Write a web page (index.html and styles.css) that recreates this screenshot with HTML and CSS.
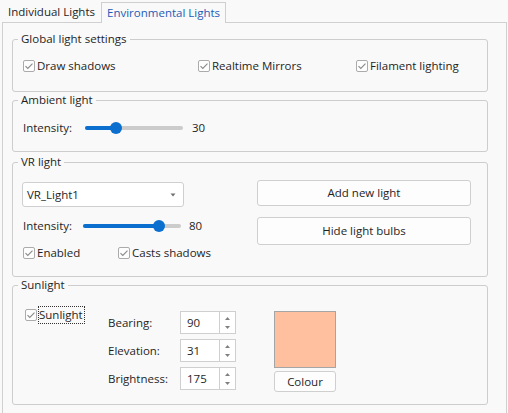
FILE: index.html
```html
<!DOCTYPE html>
<html>
<head>
<meta charset="utf-8">
<link rel="stylesheet" href="styles.css">
</head>
<body>
<div class="tabs">
  <div class="tab">Individual Lights</div>
  <div class="tab active">Environmental Lights</div>
</div>
<div class="panel">
  <fieldset class="group g-global">
    <legend>Global light settings</legend>
    <div class="global-row">
      <label class="cb"><span class="box"><svg viewBox="0 0 12 12" width="12" height="12"><path d="M2.5 6.2 L4.8 8.5 L9.5 3.6" fill="none" stroke="#8a8a8a" stroke-width="1.1"/></svg></span>Draw shadows</label>
      <label class="cb"><span class="box"><svg viewBox="0 0 12 12" width="12" height="12"><path d="M2.5 6.2 L4.8 8.5 L9.5 3.6" fill="none" stroke="#8a8a8a" stroke-width="1.1"/></svg></span>Realtime Mirrors</label>
      <label class="cb"><span class="box"><svg viewBox="0 0 12 12" width="12" height="12"><path d="M2.5 6.2 L4.8 8.5 L9.5 3.6" fill="none" stroke="#8a8a8a" stroke-width="1.1"/></svg></span>Filament lighting</label>
    </div>
  </fieldset>

  <fieldset class="group g-ambient">
    <legend>Ambient light</legend>
    <div class="slider-row amb">
      <span class="lbl">Intensity:</span>
      <div class="slider"><div class="fill" style="width:31px"></div><div class="thumb"></div></div>
      <span class="val">30</span>
    </div>
  </fieldset>

  <fieldset class="group g-vr">
    <legend>VR light</legend>
    <div class="vr-body">
      <div class="vr-left">
        <div class="combo"><span>VR_Light1</span><svg class="caret" viewBox="0 0 6 4" width="6" height="4"><path d="M0.5 0.5 L5.5 0.5 L3 3.5 Z" fill="#707070"/></svg></div>
        <div class="slider-row vr">
          <span class="lbl">Intensity:</span>
          <div class="slider"><div class="fill" style="width:76px"></div><div class="thumb"></div></div>
          <span class="val">80</span>
        </div>
        <div class="vr-checks">
          <label class="cb"><span class="box"><svg viewBox="0 0 12 12" width="12" height="12"><path d="M2.5 6.2 L4.8 8.5 L9.5 3.6" fill="none" stroke="#8a8a8a" stroke-width="1.1"/></svg></span>Enabled</label>
          <label class="cb"><span class="box"><svg viewBox="0 0 12 12" width="12" height="12"><path d="M2.5 6.2 L4.8 8.5 L9.5 3.6" fill="none" stroke="#8a8a8a" stroke-width="1.1"/></svg></span>Casts shadows</label>
        </div>
      </div>
      <div class="vr-right">
        <button class="btn b1">Add new light</button>
        <button class="btn b2">Hide light bulbs</button>
      </div>
    </div>
  </fieldset>

  <fieldset class="group g-sun">
    <legend>Sunlight</legend>
    <div class="sun-body">
      <div class="sun-cb">
        <label class="cb"><span class="box"><svg viewBox="0 0 12 12" width="12" height="12"><path d="M2.5 6.2 L4.8 8.5 L9.5 3.6" fill="none" stroke="#8a8a8a" stroke-width="1.1"/></svg></span><span class="focus">Sunlight</span></label>
      </div>
      <div class="sun-grid">
        <span class="slbl">Bearing:</span>
        <div class="spin"><span class="sval">90</span><span class="sarr"><svg viewBox="0 0 5 3" width="5" height="3"><path d="M0 3 L5 3 L2.5 0 Z" fill="#808080"/></svg><svg viewBox="0 0 5 3" width="5" height="3"><path d="M0 0 L5 0 L2.5 3 Z" fill="#808080"/></svg></span></div>
        <span class="slbl">Elevation:</span>
        <div class="spin"><span class="sval">31</span><span class="sarr"><svg viewBox="0 0 5 3" width="5" height="3"><path d="M0 3 L5 3 L2.5 0 Z" fill="#808080"/></svg><svg viewBox="0 0 5 3" width="5" height="3"><path d="M0 0 L5 0 L2.5 3 Z" fill="#808080"/></svg></span></div>
        <span class="slbl">Brightness:</span>
        <div class="spin"><span class="sval">175</span><span class="sarr"><svg viewBox="0 0 5 3" width="5" height="3"><path d="M0 3 L5 3 L2.5 0 Z" fill="#808080"/></svg><svg viewBox="0 0 5 3" width="5" height="3"><path d="M0 0 L5 0 L2.5 3 Z" fill="#808080"/></svg></span></div>
      </div>
      <div class="sun-colour">
        <div class="swatch"></div>
        <button class="btn cbtn">Colour</button>
      </div>
    </div>
  </fieldset>
</div>
</body>
</html>
```

FILE: styles.css
```css
html, body {
  margin: 0;
  padding: 0;
}
body {
  width: 508px;
  height: 413px;
  overflow: hidden;
  background: #f9f9f9;
  font-family: "Open Sans", "Noto Sans", sans-serif;
  font-size: 11.5px;
  line-height: 16px;
  color: #1f1f1f;
}
.tabs {
  display: flex;
  height: 22px;
  padding-left: 2px;
  box-sizing: border-box;
}
.tab {
  box-sizing: border-box;
  height: 22px;
  padding: 2px 6px 0;
  line-height: 20px;
  white-space: nowrap;
}
.tab.active {
  position: relative;
  z-index: 1;
  margin-top: 2px;
  height: 21px;
  padding: 0 5px;
  border: 1px solid #cfcfcf;
  border-bottom: none;
  background: #f9f9f9;
  color: #1f5bb5;
}
.panel {
  box-sizing: border-box;
  margin-left: 2px;
  width: 505px;
  height: 391px;
  border: 1px solid #d0d0d0;
  border-bottom: none;
  padding: 8px 0 0 9px;
}
.group {
  margin: 0;
  width: 476px;
  box-sizing: border-box;
  border: 1px solid #cdcdcd;
  border-radius: 3px;
  padding: 0 10px;
  min-width: 0;
}
.group legend {
  padding: 0 3px;
  margin-left: -5px;
  line-height: 16px;
}
.g-global { padding-top: 9px; padding-bottom: 15px; }
.g-ambient { padding-top: 10px; padding-bottom: 13px; }
.g-vr { margin-top: 2px; padding-top: 12px; padding-bottom: 13px; }
.g-sun { padding-top: 18px; padding-bottom: 12px; }

.cb {
  display: flex;
  align-items: center;
  height: 20px;
  white-space: nowrap;
}
.box {
  box-sizing: border-box;
  width: 12px;
  height: 12px;
  flex: none;
  border: 1px solid #ababab;
  border-radius: 2px;
  background: #fdfdfd;
  margin-right: 2px;
  display: flex;
  align-items: center;
  justify-content: center;
}
.box svg { display: block; margin: -1px; }

.global-row {
  display: grid;
  grid-template-columns: 175px 158px auto;
  height: 20px;
}

.slider-row {
  display: flex;
  align-items: center;
  height: 20px;
}
.slider-row > * { flex: none; }
.slider-row .lbl { white-space: nowrap; }
.slider-row.amb .lbl { width: 62px; }
.slider-row.amb .val { margin-left: 9px; }
.slider-row.vr .lbl { width: 60px; }
.slider-row.vr .val { margin-left: 8px; }
.slider {
  width: 98px;
  height: 4px;
  border-radius: 2px;
  background: #cccccc;
  display: flex;
  align-items: center;
}
.fill {
  height: 4px;
  border-radius: 2px;
  background: #0a6fcf;
  flex: none;
}
.thumb {
  width: 12px;
  height: 12px;
  border-radius: 50%;
  background: #0a6fcf;
  margin-left: -6px;
  flex: none;
}

.vr-body {
  display: flex;
  gap: 73px;
}
.vr-left {
  width: 161px;
  flex: none;
  display: flex;
  flex-direction: column;
}
.combo {
  box-sizing: border-box;
  height: 25px;
  margin-left: -1px;
  border: 1px solid #cfcfcf;
  border-radius: 3px;
  background: #ffffff;
  display: flex;
  align-items: center;
  justify-content: space-between;
  padding: 0 7px 0 4px;
}
.caret { display: block; }
.slider-row.vr { margin-top: 9px; }
.vr-checks {
  margin-top: 7px;
  display: grid;
  grid-template-columns: 95px auto;
}
.vr-right {
  width: 214px;
  flex: none;
  display: flex;
  flex-direction: column;
  margin-top: -2px;
}
.btn {
  box-sizing: border-box;
  margin: 0;
  padding: 0;
  font: inherit;
  color: #1f1f1f;
  background: #fdfdfd;
  border: 1px solid #cfcfcf;
  border-radius: 3px;
}
.b1 { height: 26px; }
.b2 { height: 28px; margin-top: 11px; }

.sun-body {
  display: flex;
}
.sun-cb {
  width: 85px;
  margin-top: -5px;
  padding-left: 2px;
  box-sizing: border-box;
}
.sun-cb .cb { height: 18px; align-items: center; }
.focus {
  box-sizing: border-box;
  height: 18px;
  line-height: 16px;
  border: 1px dotted #333;
  padding: 0 1px 0 0;
  margin-left: -1px;
}
.sun-grid {
  display: grid;
  grid-template-columns: 72px 56px;
  grid-auto-rows: 23px;
  row-gap: 5px;
  align-items: center;
}
.spin {
  box-sizing: border-box;
  height: 23px;
  display: flex;
  border: 1px solid #cfcfcf;
  background: #ffffff;
}
.sval {
  flex: 1;
  padding-left: 6px;
  line-height: 21px;
}
.sarr {
  width: 16px;
  border-left: 1px solid #cfcfcf;
  display: flex;
  flex-direction: column;
  align-items: center;
  justify-content: space-between;
  padding: 5px 0 4px;
  box-sizing: border-box;
}
.sarr svg { display: block; }
.sun-colour {
  margin-left: 38px;
  width: 62px;
  display: flex;
  flex-direction: column;
  gap: 3px;
}
.swatch {
  box-sizing: border-box;
  height: 57px;
  background: #ffc0a0;
  border: 1px solid #a5a5a5;
}
.cbtn { height: 21px; }
```
